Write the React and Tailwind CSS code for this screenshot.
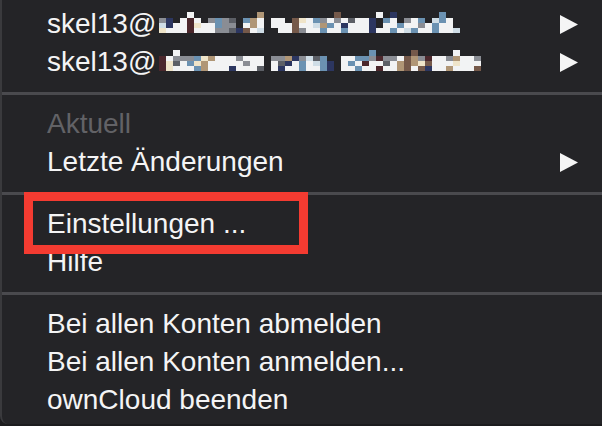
import React from 'react';

const cellColors = {
  W: 'bg-[#f2f3f4]',
  L: 'bg-[#cfdde6]',
  G: 'bg-[#8a8d94]',
  B: 'bg-[#6b92b2]',
  N: 'bg-[#2c3660]',
  T: 'bg-[#b09676]',
  R: 'bg-[#4b272c]',
  C: 'bg-[#efe4c9]',
  D: 'bg-[#5c5f66]',
  K: 'bg-[#75594a]',
  '.': 'bg-transparent',
};

// verpixelte Domains, 4 Zeilen je Spalte
const blur1 = [
  '....W.........T..........K.....W.N......B..',
  'GN.WRW.GBGD.BTW.WW.KCWBGWGWDWWN.BW.GWB.LBW',
  'LNWWRCWWBGG.WTW.WWWKWWLTBWNWWWN.WWBWWGWBWW',
  'CWWWRWWWGGDNKWL..WWKGWWBWWBWWWNWWBWLBWWBWWL',
];

const blur2 = [
  '..W...........................B.....K.....W......',
  'RWGGGBCTWWWGWWW.GGTNGLDB..WWBBGRGGWKTGRWWGTWWG',
  'RCDWBCTWWWWWGWW.WDNWBWLBN.WBWRWWDWTKTCKWWWCWWW',
  'RCWWWBTWWWNWWWD.WNWWBWWBN.WWBWWRWWTKWKNWWTWWWK',
];

function Blurred({ rows }) {
  const cols = Math.max(...rows.map((r) => r.length));
  return (
    <span className="inline-flex ml-[3px] -translate-y-[2px]">
      {Array.from({ length: cols }, (_, c) => (
        <span key={c} className="flex flex-col w-[7px]">
          {rows.map((r, i) => (
            <span
              key={i}
              className={`${cellColors[r[c] || '.']} ${i === 0 ? 'h-[6px]' : 'h-[5px]'}`}
            />
          ))}
        </span>
      ))}
    </span>
  );
}

function Arrow() {
  return (
    <svg width="18" height="19" viewBox="0 0 18 19" className="shrink-0">
      <polygon points="0,0 18,9.5 0,19" fill="#f5f5f5" />
    </svg>
  );
}

function Item({ children, arrow, muted }) {
  return (
    <div className="h-[38px] flex items-center justify-between pl-[45px] pr-[24px]">
      <span className={`flex items-end leading-[38px] whitespace-nowrap ${muted ? 'text-[#626266]' : 'text-[#f4f4f5]'}`}>
        {children}
      </span>
      {arrow && <Arrow />}
    </div>
  );
}

function Separator() {
  return (
    <div className="h-[24px] flex items-center">
      <div className="h-[3px] w-full bg-[#4a4a4e]" />
    </div>
  );
}

export default function App() {
  return (
    <div className="w-[602px] h-[426px] bg-[#1c1c1e] overflow-hidden">
      <div
        className="relative h-[424px] bg-[#242427] border-l-2 border-[#3a3a3d] rounded-bl-[8px] pt-[5px] text-[28px]"
        style={{ fontFamily: '"Liberation Sans", Arial, sans-serif' }}
      >
        <Item arrow>
          <span className="flex items-center">
            skel13@<Blurred rows={blur1} />
          </span>
        </Item>
        <Item arrow>
          <span className="flex items-center">
            skel13@<Blurred rows={blur2} />
          </span>
        </Item>
        <Separator />
        <Item muted>Aktuell</Item>
        <Item arrow>Letzte Änderungen</Item>
        <Separator />
        <Item>Einstellungen ...</Item>
        <Item>Hilfe</Item>
        <Separator />
        <Item>Bei allen Konten abmelden</Item>
        <Item>Bei allen Konten anmelden...</Item>
        <Item>ownCloud beenden</Item>

        {/* rote Markierung */}
        <div className="absolute left-[22px] top-[192px] w-[284px] h-[62px] border-[9px] border-[#f43b31] pointer-events-none" />
      </div>
    </div>
  );
}
